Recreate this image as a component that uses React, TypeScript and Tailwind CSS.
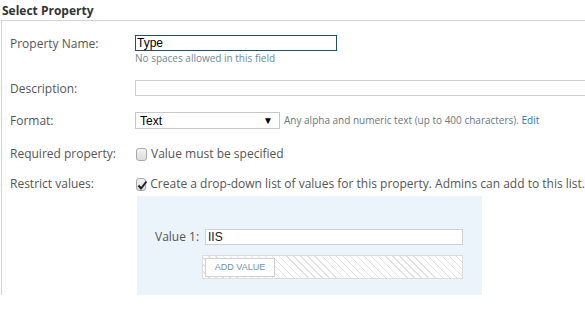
export default function App() {
  const label = "w-[133px] shrink-0 pl-[8px] text-[12px] text-[#555]";

  return (
    <div className="w-[585px] h-[311px] overflow-hidden bg-white font-['Open_Sans',sans-serif]">
      <div className="h-[20px] pl-[2px] pt-[4px] text-[12px] font-bold leading-[14px] text-[#333]">
        Select Property
      </div>

      <div className="h-[275px] border-t border-l border-[#d3d3d3] ml-[1px]">
        {/* property name */}
        <div className="flex pt-[14px]">
          <div className={label + " leading-[16px] pt-[1px]"}>Property Name:</div>
          <div>
            <div className="w-[202px] h-[16px] border border-[#1f4e6e] pl-[1px] text-[12px] leading-[14px] text-black font-['Liberation_Sans',sans-serif]">
              Type
            </div>
            <div className="text-[10px] leading-[14px] text-[#6e8a98]">No spaces allowed in this field</div>
          </div>
        </div>

        {/* description */}
        <div className="flex items-center mt-[15px] h-[16px]">
          <div className={label + " leading-[16px] pt-[1px]"}>Description:</div>
          <div className="grow h-[16px] border border-r-0 border-[#d0d0d0]"></div>
        </div>

        {/* format */}
        <div className="flex items-center mt-[16px] h-[17px]">
          <div className={label + " leading-[16px]"}>Format:</div>
          <div className="w-[145px] h-[17px] border border-[#c8c8c8] flex items-center justify-between pl-[4px] pr-[6px] text-[12px] text-black font-['Liberation_Sans',sans-serif]">
            <span>Text</span>
            <span className="text-[10px]">▼</span>
          </div>
          <div className="ml-[4px] text-[10px] text-[#6b7680] whitespace-nowrap">
            Any alpha and numeric text (up to 400 characters). <span className="text-[#2a79b2]">Edit</span>
          </div>
        </div>

        {/* required */}
        <div className="flex items-center mt-[17px] h-[16px]">
          <div className={label}>Required property:</div>
          <span className="w-[11px] h-[13px] ml-[1px] rounded-[3px] border border-[#a9a9a9] bg-gradient-to-b from-[#f4f4f4] to-[#dcdcdc]"></span>
          <span className="ml-[4px] text-[12px] text-[#555] whitespace-nowrap">Value must be specified</span>
        </div>

        {/* restrict */}
        <div className="flex items-center mt-[14px] h-[16px]">
          <div className={label}>Restrict values:</div>
          <span className="relative w-[11px] h-[13px] ml-[1px] rounded-[3px] border border-[#a9a9a9] bg-gradient-to-b from-[#f4f4f4] to-[#dcdcdc]">
            <svg viewBox="0 0 11 13" className="absolute left-0 top-0 w-[11px] h-[13px]">
              <path d="M1.5 6.5 L4 9.5 L9.5 2.5" stroke="#222" strokeWidth="2" fill="none" />
            </svg>
          </span>
          <span className="ml-[4px] text-[12px] text-[#555] whitespace-nowrap">
            Create a drop-down list of values for this property. Admins can add to this list.
          </span>
        </div>

        {/* values panel */}
        <div className="ml-[135px] mt-[4px] w-[345px] h-[99px] bg-[#ebf4fa] pt-[33px] pl-[18px]">
          <div className="flex items-center">
            <div className="w-[50px] text-[12px] text-[#555] leading-[16px]">Value 1:</div>
            <div className="w-[258px] h-[16px] border border-[#d0d0d0] bg-white pl-[2px] text-[12px] leading-[14px] text-[#222] font-['Liberation_Sans',sans-serif]">
              IIS
            </div>
          </div>
          <div className="ml-[47px] mt-[10px] w-[261px] h-[24px] border border-[#dcdcdc] p-[2px] bg-[repeating-linear-gradient(45deg,#ffffff_0px,#ffffff_4px,#e2e2e2_4px,#e2e2e2_5px)]">
            <div className="w-[70px] h-[19px] border border-[#d0d0d0] bg-white flex items-center justify-center text-[9px] text-[#6f8fb0] font-['Liberation_Sans',sans-serif]">
              ADD VALUE
            </div>
          </div>
        </div>
      </div>
    </div>
  );
}
